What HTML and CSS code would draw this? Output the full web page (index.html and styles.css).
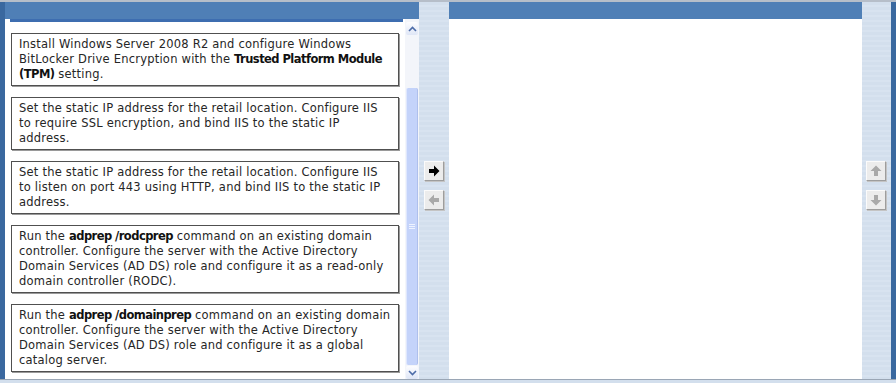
FILE: index.html
```html
<!DOCTYPE html>
<html lang="en">
<head>
  <meta charset="UTF-8">
  <title>Build List</title>
  <link rel="stylesheet" href="styles.css">
</head>
<body>
  <div class="frame">
    <div class="edge"></div>

    <div class="panel list-panel">
      <div class="panel-head"></div>
      <div class="panel-body">
        <div class="list">
          <div class="cut"></div>
          <div class="answer">Install Windows Server 2008 R2 and configure Windows BitLocker Drive Encryption with the <b>Trusted Platform Module (TPM)</b> setting.</div>
          <div class="answer">Set the static IP address for the retail location. Configure IIS to require SSL encryption, and bind IIS to the static IP address.</div>
          <div class="answer">Set the static IP address for the retail location. Configure IIS to listen on port 443 using HTTP, and bind IIS to the static IP address.</div>
          <div class="answer">Run the <b>adprep /rodcprep</b> command on an existing domain controller. Configure the server with the Active Directory Domain Services (AD DS) role and configure it as a read-only domain controller (RODC).</div>
          <div class="answer">Run the <b>adprep /domainprep</b> command on an existing domain controller. Configure the server with the Active Directory Domain Services (AD DS) role and configure it as a global catalog server.</div>
        </div>
        <div class="scrollbar">
          <div class="sb-btn">
            <svg width="9" height="6" viewBox="0 0 9 6"><path d="M1 5 L4.5 1.5 L8 5" fill="none" stroke="#4d6ca8" stroke-width="1.6"/></svg>
          </div>
          <div class="sb-track">
            <div class="sb-thumb">
              <div class="grip"></div>
            </div>
          </div>
          <div class="sb-btn">
            <svg width="9" height="6" viewBox="0 0 9 6"><path d="M1 1 L4.5 4.5 L8 1" fill="none" stroke="#4d6ca8" stroke-width="1.6"/></svg>
          </div>
        </div>
      </div>
    </div>

    <div class="tools">
      <button class="tool-btn">
        <svg width="12" height="12" viewBox="0 0 12 12"><path d="M1 4 H6 V0.5 L11.5 6 L6 11.5 V8 H1 Z" fill="#000"/></svg>
      </button>
      <button class="tool-btn">
        <svg width="12" height="12" viewBox="0 0 12 12"><path d="M11 4 H6 V0.5 L0.5 6 L6 11.5 V8 H11 Z" fill="#a9a9a9"/></svg>
      </button>
    </div>

    <div class="panel drop-panel">
      <div class="panel-head"></div>
      <div class="panel-body"></div>
    </div>

    <div class="tools side">
      <button class="tool-btn">
        <svg width="12" height="12" viewBox="0 0 12 12"><path d="M4 11 V6 H0.5 L6 0.5 L11.5 6 H8 V11 Z" fill="#a9a9a9"/></svg>
      </button>
      <button class="tool-btn">
        <svg width="12" height="12" viewBox="0 0 12 12"><path d="M4 1 V6 H0.5 L6 11.5 L11.5 6 H8 V1 Z" fill="#a9a9a9"/></svg>
      </button>
    </div>

    <div class="edge"></div>
  </div>
  <div class="footer"></div>
</body>
</html>
```
FILE: styles.css
```css
body {
  margin: 0;
  padding: 0;
  width: 896px;
  height: 383px;
  overflow: hidden;
  background-color: #d3dfed;
  font-family: "DejaVu Sans", Verdana, sans-serif;
}

.frame {
  display: flex;
  height: 377px;
  border-top: 2px solid #b6bec9;
}

.edge {
  width: 5px;
  background-color: #3a689f;
}

.panel {
  display: flex;
  flex-direction: column;
}

.list-panel {
  width: 414px;
}

.drop-panel {
  width: 413px;
}

.panel-head {
  height: 17px;
  background-color: #4f7fb6;
}

.panel-body {
  flex: 1;
  display: flex;
  background-color: #ffffff;
  overflow: hidden;
}

.list {
  width: 400px;
  overflow: hidden;
}

.cut {
  margin: 0 0 0 5px;
  width: 393px;
  height: 3px;
  background-color: #3d6db0;
}

.answer {
  margin: 11px 0 0 6px;
  width: 374px;
  padding: 3px 5px 3px 7px;
  border: 1px solid #505050;
  box-shadow: 1px 1px 0 #9a9a9a;
  font-size: 11.5px;
  letter-spacing: 0.22px;
  line-height: 15px;
  color: #262626;
}

.answer b {
  letter-spacing: -0.55px;
  color: #111;
}

.scrollbar {
  width: 14px;
  display: flex;
  flex-direction: column;
  background-color: #f3f5fa;
  padding-top: 3px;
  box-sizing: border-box;
}

.sb-btn {
  height: 13px;
  margin: 0 1px;
  border-radius: 2px;
  background: linear-gradient(#fdfdff, #dfe6f6);
  display: flex;
  align-items: center;
  justify-content: center;
}

.sb-track {
  flex: 1;
  display: flex;
  flex-direction: column;
  justify-content: flex-end;
  padding-bottom: 1px;
}

.sb-thumb {
  height: 277px;
  margin: 0 1px;
  border-radius: 2px;
  background-color: #c4d3fa;
  border-left: 1px solid #dfe7fd;
  border-right: 1px solid #aebfec;
  display: flex;
  align-items: center;
  justify-content: center;
}

.grip {
  width: 6px;
  height: 5px;
  background: repeating-linear-gradient(#eef3ff 0, #eef3ff 1px, transparent 1px, transparent 2px);
}

.tools {
  width: 30px;
  padding-top: 159px;
  box-sizing: border-box;
  display: flex;
  flex-direction: column;
  align-items: flex-start;
  gap: 9px;
  padding-left: 5px;
  background: repeating-linear-gradient(#d3dfed 0, #d3dfed 3px, #d8e3f0 3px, #d8e3f0 5px);
}

.side {
  width: 29px;
  padding-left: 4px;
}

.tool-btn {
  width: 20px;
  height: 20px;
  padding: 0;
  display: flex;
  align-items: center;
  justify-content: center;
  background-color: #ececec;
  border: 1px solid;
  border-color: #fbfbfb #9d9d9d #9d9d9d #fbfbfb;
  box-shadow: 1px 1px 0 #c4c4c4;
}

.footer {
  height: 4px;
  border-top: 1px solid #9aa6b5;
  background-color: #d3dfed;
  box-sizing: border-box;
}
```
